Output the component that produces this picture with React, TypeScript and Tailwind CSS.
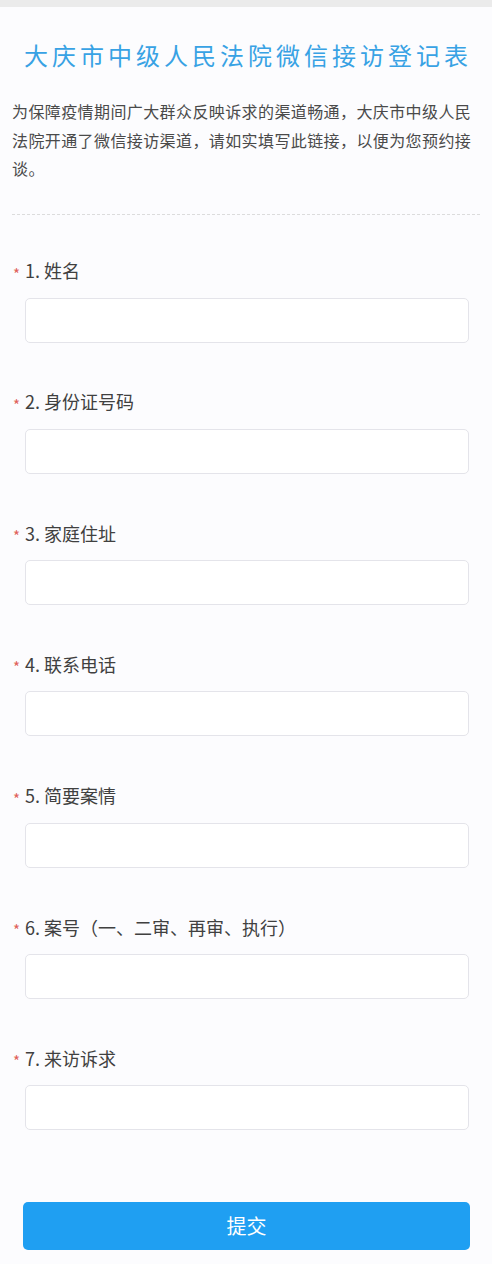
import React from "react";

const fields = [
  "1. 姓名",
  "2. 身份证号码",
  "3. 家庭住址",
  "4. 联系电话",
  "5. 简要案情",
  "6. 案号（一、二审、再审、执行）",
  "7. 来访诉求",
];

export default function App() {
  return (
    <div
      className="min-h-[1264px] w-[492px] bg-[#fcfcfe] flex flex-col"
      style={{ fontFamily: '"Noto Sans CJK SC", "Noto Sans", sans-serif' }}
    >
      <div className="h-[7px] bg-[#ebebeb]" />
      <h1 className="mt-[31px] whitespace-nowrap text-center text-[24px] leading-[34px] tracking-[4px] pl-[4px] text-[#38a2e4] font-normal">
        大庆市中级人民法院微信接访登记表
      </h1>
      <p className="mt-[25px] px-[12px] text-[16px] leading-[28.5px] tracking-[0.4px] text-[#4a4a4a]">
        为保障疫情期间广大群众反映诉求的渠道畅通，大庆市中级人民法院开通了微信接访渠道，请如实填写此链接，以便为您预约接谈。
      </p>
      <div className="mt-[31px] mx-[12px] border-t border-dashed border-[#dcdcdc]" />
      <div className="mt-[44px] flex flex-col">
        {fields.map((f) => (
          <div key={f} className="flex flex-col h-[131.33px]">
            <div className="flex items-center h-[24px] text-[18px] text-[#404040]">
              <span className="w-[25px] pl-[13px] pt-[5px] text-[#e0605a] text-[15px] leading-none">*</span>
              <span>{f}</span>
            </div>
            <div className="mt-[15px] ml-[25px] w-[444px] h-[45px] rounded-[5px] border border-[#e4e4ea] bg-white" />
          </div>
        ))}
      </div>
      <button className="mt-[24px] ml-[23px] w-[447px] h-[48px] rounded-[5px] bg-[#1f9ff2] text-white text-[20px]">
        提交
      </button>
    </div>
  );
}
